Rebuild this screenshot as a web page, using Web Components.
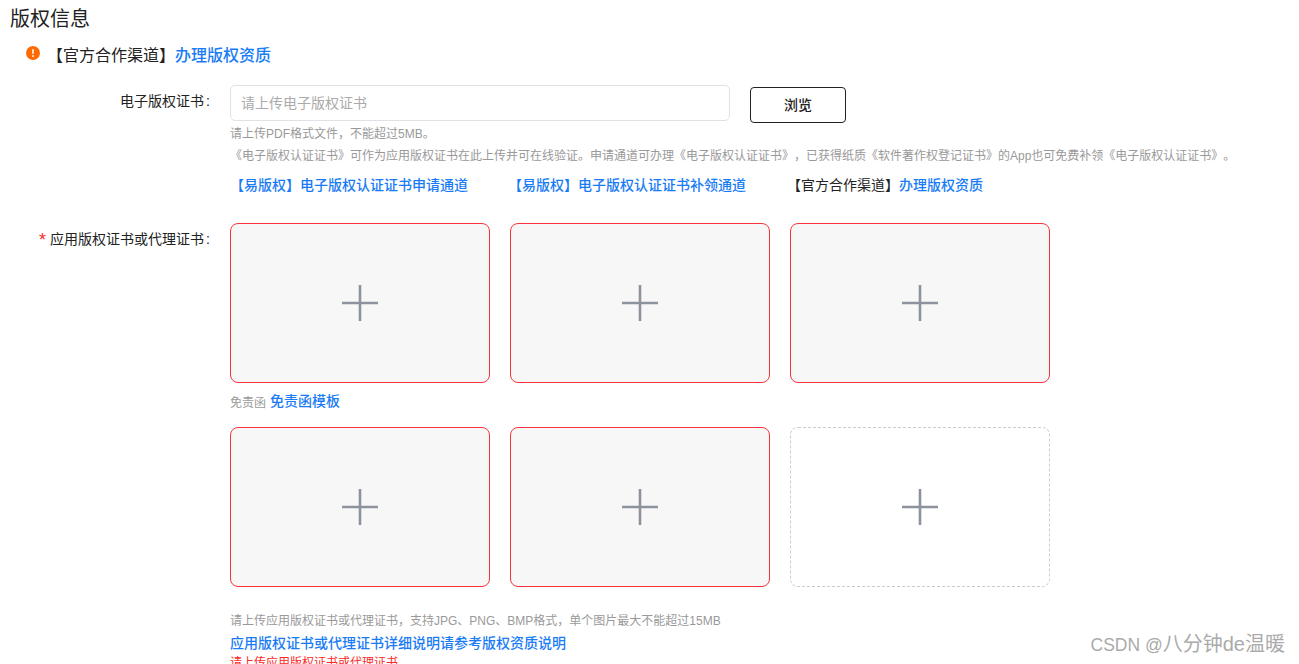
<!DOCTYPE html>
<html lang="zh">
<head>
<meta charset="utf-8">
<title>版权信息</title>
<style>
    html, body { margin: 0; height: 664px; overflow: hidden; background: #fff; }
    body { font-family: "Liberation Sans", "Noto Sans CJK SC", sans-serif; color: #222; text-spacing-trim: space-all; }
</style>
</head>
<body>
<copyright-form></copyright-form>

<script>
class TextLink extends HTMLElement {
    constructor() {
        super();
        this.attachShadow({ mode: 'open' });
        // no whitespace in here: the host is inline, a stray space would show up
        this.shadowRoot.innerHTML = `<style>
                :host{
                    display: inline;
                    color: #1a7cf5;
                    font-weight: 500;
                    cursor: pointer;
                }
            </style><slot></slot>`;
    }
}

class HintText extends HTMLElement {
    constructor() {
        super();
        this.attachShadow({ mode: 'open' });
        this.shadowRoot.innerHTML = `<style>
                :host{
                    display: block;
                    font-size: 12px;
                    line-height: 22px;
                    color: #999;
                    white-space: nowrap;
                }
                :host([inline]){
                    display: inline;
                    vertical-align: -1px;
                }
                :host([error]){
                    color: #fa2a2a;
                }
            </style><slot></slot>`;
    }
}

class NoticeBar extends HTMLElement {
    constructor() {
        super();
        this.attachShadow({ mode: 'open' });
        this.shadowRoot.innerHTML = `
            <style>
                :host{
                    display: flex;
                    height: 33px;
                    padding: 1px 0 0 26px;
                    font-size: 16px;
                    line-height: 34px;
                }
                svg{
                    flex: none;
                    width: 14px;
                    height: 14px;
                    margin: 7px 7px 0 0;
                }
            </style>
            <svg viewBox="0 0 14 14">
                <circle cx="7" cy="7" r="7" fill="#ff6a00"/>
                <rect x="6.2" y="3" width="1.6" height="5" rx="0.7" fill="#fff"/>
                <circle cx="7" cy="10" r="0.95" fill="#fff"/>
            </svg>
            <div><slot></slot></div>`;
    }
}

class FormRow extends HTMLElement {
    constructor() {
        super();
        this.attachShadow({ mode: 'open' });
        this.shadowRoot.innerHTML = `
            <style>
                :host{
                    display: grid;
                    grid-template-columns: 210px 1fr;
                    column-gap: 20px;
                }
                #label{
                    font-size: 14px;
                    line-height: 32px;
                    text-align: right;
                    white-space: nowrap;
                }
                #star{
                    display: none;
                    font-size: 18px;
                    line-height: 0;
                    vertical-align: -2px;
                    color: #fa2a2a;
                    margin-right: 4px;
                }
                :host([required]) #star{
                    display: inline;
                }
                #colon{
                    margin-left: 2px;
                }
            </style>
            <div id="label"><span id="star">*</span><span id="text"></span><span id="colon">:</span></div>
            <div id="main"><slot></slot></div>`;
    }

    connectedCallback() {
        this.shadowRoot.querySelector('#text').textContent = this.getAttribute('label');
    }
}

class FileInput extends HTMLElement {
    constructor() {
        super();
        this.attachShadow({ mode: 'open' });
        this.shadowRoot.innerHTML = `
            <style>
                :host{
                    display: flex;
                    gap: 20px;
                    height: 38px;
                }
                #field{
                    box-sizing: border-box;
                    width: 500px;
                    height: 36px;
                    padding: 0 10px;
                    border: 1px solid #e1e1e8;
                    border-radius: 5px;
                    font-size: 14px;
                    line-height: 34px;
                    color: #aaa;
                }
                #browse{
                    box-sizing: border-box;
                    width: 96px;
                    height: 36px;
                    margin-top: 2px;
                    padding: 0 0 2px;
                    border: 1px solid #222;
                    border-radius: 4px;
                    background: #fff;
                    font: inherit;
                    font-size: 14px;
                    font-weight: 500;
                    color: #222;
                }
            </style>
            <div id="field"><slot></slot></div>
            <button id="browse">浏览</button>`;
    }
}

class UploadCard extends HTMLElement {
    constructor() {
        super();
        this.attachShadow({ mode: 'open' });
        this.shadowRoot.innerHTML = `
            <style>
                :host{
                    box-sizing: border-box;
                    display: flex;
                    align-items: center;
                    justify-content: center;
                    width: 260px;
                    height: 160px;
                    border: 1px solid #f8333a;
                    border-radius: 8px;
                    background: #f7f7f7;
                }
                :host([empty]){
                    border: 1px dashed #ccc;
                    background: #fff;
                }
                svg{
                    width: 36px;
                    height: 36px;
                }
            </style>
            <svg viewBox="0 0 36 36">
                <path d="M0 18H36M18 0V36" stroke="#8c939d" stroke-width="2.6" fill="none"/>
            </svg>`;
    }
}

class UploadGrid extends HTMLElement {
    constructor() {
        super();
        this.attachShadow({ mode: 'open' });
        this.shadowRoot.innerHTML = `
            <style>
                :host{
                    display: flex;
                    gap: 20px;
                }
            </style>
            <slot></slot>`;
    }
}

class CopyrightForm extends HTMLElement {
    constructor() {
        super();
        this.attachShadow({ mode: 'open' });
        this.shadowRoot.innerHTML = `
            <style>
                :host{
                    display: block;
                    position: relative;
                    height: 664px;
                    overflow: hidden;
                }
                h2{
                    margin: 0;
                    padding-left: 10px;
                    font-size: 20px;
                    font-weight: 400;
                    line-height: 38px;
                }
                .first{
                    margin-top: 13px;
                }
                .second{
                    margin-top: 27px;
                }
                .links{
                    display: flex;
                    margin-top: 7px;
                    font-size: 14px;
                    line-height: 22px;
                    white-space: nowrap;
                }
                .links > :nth-child(1){
                    margin-right: 40px;
                }
                .links > :nth-child(2){
                    margin-right: 41px;
                }
                .disclaimer{
                    height: 22px;
                    margin: 7px 0 15px;
                    font-size: 14px;
                    line-height: 22px;
                }
                .tips{
                    margin-top: 23px;
                }
                .detail{
                    display: block;
                    font-size: 14px;
                    line-height: 22px;
                }
                .error{
                    margin-top: -2px;
                }
                #mark{
                    position: absolute;
                    right: 14px;
                    top: 630px;
                    font-size: 20px;
                    line-height: 28px;
                    color: #aaa;
                    white-space: nowrap;
                }
                #mark span{
                    font-size: 17.5px;
                }
            </style>
            <h2>版权信息</h2>
            <notice-bar>【官方合作渠道】<text-link>办理版权资质</text-link></notice-bar>

            <form-row class="first" label="电子版权证书">
                <file-input>请上传电子版权证书</file-input>
                <hint-text>请上传PDF格式文件，不能超过5MB。</hint-text>
                <hint-text>《电子版权认证证书》可作为应用版权证书在此上传并可在线验证。申请通道可办理《电子版权认证证书》，已获得纸质《软件著作权登记证书》的App也可免费补领《电子版权认证证书》。</hint-text>
                <div class="links">
                    <text-link>【易版权】电子版权认证证书申请通道</text-link>
                    <text-link>【易版权】电子版权认证证书补领通道</text-link>
                    <span>【官方合作渠道】<text-link>办理版权资质</text-link></span>
                </div>
            </form-row>

            <form-row class="second" label="应用版权证书或代理证书" required>
                <upload-grid>
                    <upload-card></upload-card>
                    <upload-card></upload-card>
                    <upload-card></upload-card>
                </upload-grid>
                <div class="disclaimer">
                    <hint-text inline>免责函</hint-text>
                    <text-link>免责函模板</text-link>
                </div>
                <upload-grid>
                    <upload-card></upload-card>
                    <upload-card></upload-card>
                    <upload-card empty></upload-card>
                </upload-grid>
                <hint-text class="tips">请上传应用版权证书或代理证书，支持JPG、PNG、BMP格式，单个图片最大不能超过15MB</hint-text>
                <text-link class="detail">应用版权证书或代理证书详细说明请参考版权资质说明</text-link>
                <hint-text class="error" error>请上传应用版权证书或代理证书</hint-text>
            </form-row>

            <div id="mark"><span>CSDN @</span>八分钟de温暖</div>`;
    }
}

customElements.define('text-link', TextLink);
customElements.define('hint-text', HintText);
customElements.define('notice-bar', NoticeBar);
customElements.define('form-row', FormRow);
customElements.define('file-input', FileInput);
customElements.define('upload-card', UploadCard);
customElements.define('upload-grid', UploadGrid);
customElements.define('copyright-form', CopyrightForm);
</script>
</body>
</html>
